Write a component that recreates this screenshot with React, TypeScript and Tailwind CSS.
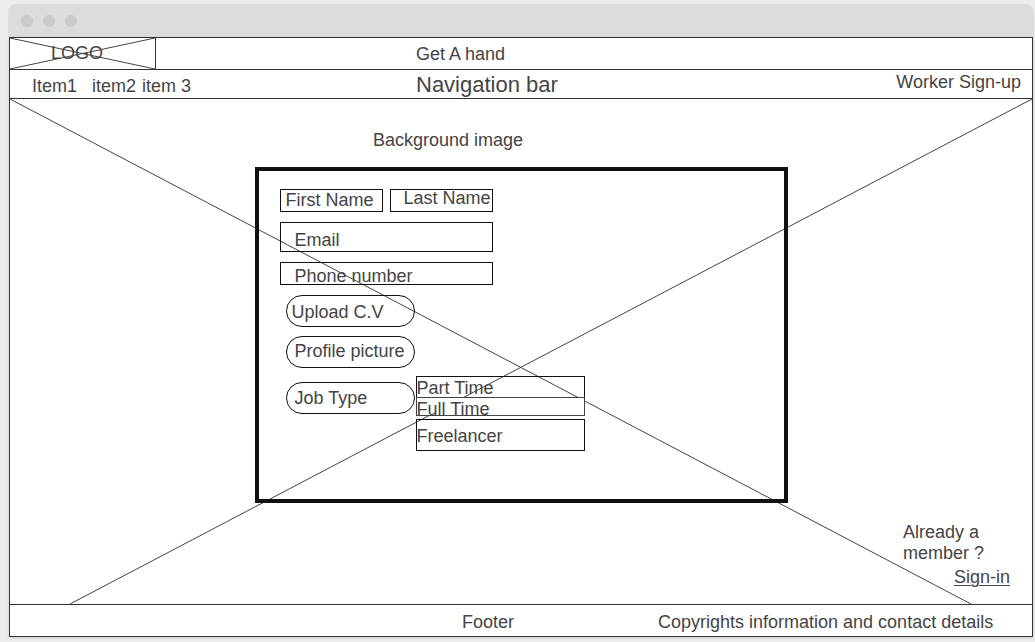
import React from "react";

const navItems = [
  { label: "Item1", gap: "mr-[15px]" },
  { label: "item2", gap: "mr-[6px]" },
  { label: "item 3", gap: "" },
];

const field =
  "block border border-[#111] bg-transparent text-[#444] placeholder:text-[#444] placeholder:opacity-100 outline-none";
const pill =
  "block h-8 w-[129px] rounded-2xl border border-[#111] text-left whitespace-nowrap";
const option = "block w-full border text-left whitespace-nowrap";

function WindowBar() {
  return (
    <div className="flex h-[33px] items-center gap-[10px] rounded-t-lg bg-[#dcdcdc] px-[13px]">
      <span className="size-3 rounded-full bg-[#cacaca]" />
      <span className="size-3 rounded-full bg-[#cacaca]" />
      <span className="size-3 rounded-full bg-[#cacaca]" />
    </div>
  );
}

function Logo() {
  return (
    <div className="relative h-[31px] w-[146px] border-r border-[#333] pl-[41px] pt-[5px]">
      <span>LOGO</span>
      <svg
        className="absolute inset-0 size-full"
        viewBox="0 0 145 31"
        preserveAspectRatio="none"
        stroke="#444"
        aria-hidden="true"
      >
        <path d="M0 0L145 31M145 0L0 31" />
      </svg>
    </div>
  );
}

function SignupForm() {
  return (
    <form
      className="relative mx-auto mt-4 h-[336px] w-[533px] border-4 border-[#111] pl-[21px] pt-[18px]"
      onSubmit={(e) => e.preventDefault()}
    >
      <div className="flex gap-[7px]">
        <input
          aria-label="First Name"
          placeholder="First Name"
          className={`${field} h-[23px] w-[103px] pl-[5px]`}
        />
        <input
          aria-label="Last Name"
          placeholder="Last Name"
          className={`${field} h-[23px] w-[103px] pb-1 pl-[13px]`}
        />
      </div>
      <input
        type="email"
        aria-label="Email"
        placeholder="Email"
        className={`${field} mt-[10px] h-[30px] w-[213px] pl-[14px] pt-[6px]`}
      />
      <input
        type="tel"
        aria-label="Phone number"
        placeholder="Phone number"
        className={`${field} mt-[10px] h-[23px] w-[213px] pl-[14px] pt-[6px]`}
      />
      <div className="pl-[6px]">
        <button type="button" className={`${pill} mt-[10px] pl-[5px] pt-[2px]`}>
          Upload C.V
        </button>
        <button type="button" className={`${pill} mt-[9px] pb-[2px] pl-2`}>
          Profile picture
        </button>
        <div className="mt-2 flex items-start gap-px">
          <button type="button" className={`${pill} mt-[6px] pl-2`}>
            Job Type
          </button>
          <ul className="w-[169px]">
            <li>
              <button type="button" className={`${option} h-[22px] border-[#111] pt-px`}>
                Part Time
              </button>
            </li>
            <li className="-mt-px">
              <button
                type="button"
                className={`${option} h-[19px] border-[#444] bg-white pt-px`}
              >
                Full Time
              </button>
            </li>
            <li className="mt-[3px]">
              <button type="button" className={`${option} h-8 border-[#111] pt-[2px]`}>
                Freelancer
              </button>
            </li>
          </ul>
        </div>
      </div>
    </form>
  );
}

export default function App() {
  return (
    <div className="min-h-screen bg-[#ececec] pb-[5px] pl-2 pr-px pt-1 font-['Liberation_Sans',Arial,sans-serif] text-[18px] leading-[21px] text-[#444]">
      <WindowBar />
      <div className="ml-px mr-px border border-[#333] bg-white shadow-sm">
        <header className="grid h-8 grid-cols-[406px_1fr] border-b border-[#333]">
          <Logo />
          <h1 className="pt-[6px]">Get A hand</h1>
        </header>

        <nav className="grid h-[29px] grid-cols-[406px_1fr_auto] border-b border-[#333]">
          <div className="flex pl-[22px] pt-[6px]">
            {navItems.map((item) => (
              <a key={item.label} href="#" className={item.gap}>
                {item.label}
              </a>
            ))}
          </div>
          <p className="pt-1 text-[22px]">Navigation bar</p>
          <a href="#" className="pr-[11px] pt-[2px]">
            Worker Sign-up
          </a>
        </nav>

        <main className="relative border-b border-[#333] pb-4 pt-[31px]">
          <svg
            className="absolute inset-0 size-full"
            viewBox="0 0 1022 505"
            preserveAspectRatio="none"
            stroke="#444"
            aria-hidden="true"
          >
            <path d="M0 0L961 505M1022 0L60 505" />
          </svg>
          <p className="relative pl-[363px]">Background image</p>
          <SignupForm />
          <div className="relative ml-auto mr-[22px] mt-[19px] w-[107px]">
            <p>
              Already a<br />
              member ?
            </p>
            <a
              href="#"
              className="mt-[3px] block text-right underline decoration-1 underline-offset-2"
            >
              Sign-in
            </a>
          </div>
        </main>

        <footer className="grid h-[31px] grid-cols-[452px_196px_1fr] pt-[7px]">
          <p className="col-start-2">Footer</p>
          <p className="whitespace-nowrap">Copyrights information and contact details</p>
        </footer>
      </div>
    </div>
  );
}
